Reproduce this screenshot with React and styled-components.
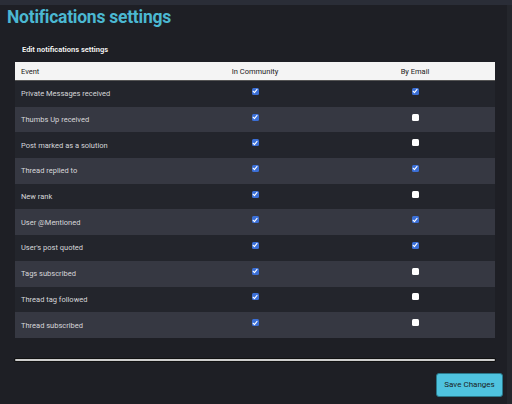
import React from 'react'
import styled, { createGlobalStyle } from 'styled-components'

const GlobalStyle = createGlobalStyle`
  html, body {
    margin: 0;
    padding: 0;
    background: #1e1f25;
    font-family: Roboto, "Liberation Sans", Arial, sans-serif;
  }
`

// Data
const events = [
  { name: 'Private Messages received', community: true, email: true },
  { name: 'Thumbs Up received', community: true, email: false },
  { name: 'Post marked as a solution', community: true, email: false },
  { name: 'Thread replied to', community: true, email: true },
  { name: 'New rank', community: true, email: false },
  { name: 'User @Mentioned', community: true, email: true },
  { name: "User's post quoted", community: true, email: true },
  { name: 'Tags subscribed', community: true, email: false },
  { name: 'Thread tag followed', community: true, email: false },
  { name: 'Thread subscribed', community: true, email: false },
]

const Check = ({ checked }) => (
  <Box checked={checked}>
    {checked && (
      <svg width="6" height="6" viewBox="0 0 10 10">
        <path d="M1.8 5.4 L4 7.6 L8.4 2.2" fill="none" stroke="#fff" strokeWidth="1.8" strokeLinecap="round" strokeLinejoin="round" />
      </svg>
    )}
  </Box>
)

export default function App() {
  return (
    <Page>
      <GlobalStyle />
      <TopStrip />
      <Main>
        <Title>Notifications settings</Title>
        <Subtitle>Edit notifications settings</Subtitle>
        <Table>
          <HeaderRow>
            <HeadCell>Event</HeadCell>
            <HeadCell center>In Community</HeadCell>
            <HeadCell center>By Email</HeadCell>
          </HeaderRow>
          {events.map((e, i) => (
            <Row key={e.name} alt={i % 2 === 1}>
              <Cell>{e.name}</Cell>
              <Cell center><Check checked={e.community} /></Cell>
              <Cell center><Check checked={e.email} /></Cell>
            </Row>
          ))}
        </Table>
        <Divider />
        <Footer>
          <SaveButton>Save Changes</SaveButton>
        </Footer>
      </Main>
      <ScrollTrack />
    </Page>
  )
}

const Page = styled.div`
  position: relative;
  width: 512px;
  height: 404px;
  overflow: hidden;
  background: #1e1f25;
`

const TopStrip = styled.div`
  height: 5px;
  background: #2a2d37;
`

const ScrollTrack = styled.div`
  position: absolute;
  top: 5px;
  right: 0;
  width: 5px;
  bottom: 0;
  background: #24262c;
`

const Main = styled.div`
  padding: 0 7px 0 0;
`

const Title = styled.h1`
  margin: 0;
  padding: 1px 0 0 7px;
  font-size: 17.5px;
  line-height: 22px;
  font-weight: 700;
  color: #4bb8d2;
  letter-spacing: -0.25px;
`

const Subtitle = styled.div`
  padding: 17px 0 0 22px;
  height: 17px;
  font-size: 7.5px;
  font-weight: 700;
  color: #f2f2f2;
  text-shadow: 0 0 1px #000;
`

const Table = styled.div`
  margin-left: 15px;
  width: 480px;
`

const HeaderRow = styled.div`
  display: grid;
  grid-template-columns: 160px 160px 160px;
  height: 19px;
  align-items: center;
  background: #f4f4f4;
  border-bottom: 1px solid #555;
  box-sizing: border-box;
`

const HeadCell = styled.div`
  padding-left: ${p => (p.center ? '0' : '6px')};
  text-align: ${p => (p.center ? 'center' : 'left')};
  font-size: 7.5px;
  color: #222;
`

const Row = styled.div`
  display: grid;
  grid-template-columns: 160px 160px 160px;
  height: 25.7px;
  align-items: center;
  background: ${p => (p.alt ? '#363842' : '#23252c')};
`

const Cell = styled.div`
  display: flex;
  justify-content: ${p => (p.center ? 'center' : 'flex-start')};
  padding-left: ${p => (p.center ? '0' : '6px')};
  font-size: 7.5px;
  color: #d6d7da;
  margin-top: ${p => (p.center ? '-5px' : '0')};
`

const Box = styled.span`
  display: inline-flex;
  align-items: center;
  justify-content: center;
  width: 7px;
  height: 7px;
  border-radius: 1.5px;
  background: ${p => (p.checked ? '#3b6fd6' : '#ffffff')};
`

const Divider = styled.div`
  margin: 21px 0 0 15px;
  width: 480px;
  height: 2px;
  border-radius: 2px;
  background: #cdcdcd;
  box-shadow: 0 0 0 1px #111;
`

const Footer = styled.div`
  display: flex;
  justify-content: flex-end;
  padding-top: 12px;
  padding-right: 2px;
`

const SaveButton = styled.button`
  width: 67px;
  height: 24px;
  padding: 0;
  border: 1px solid #2a7a8c;
  border-radius: 3px;
  background: #4fc3df;
  color: #1a1d22;
  font-family: Roboto, "Liberation Sans", Arial, sans-serif;
  font-size: 8px;
`
